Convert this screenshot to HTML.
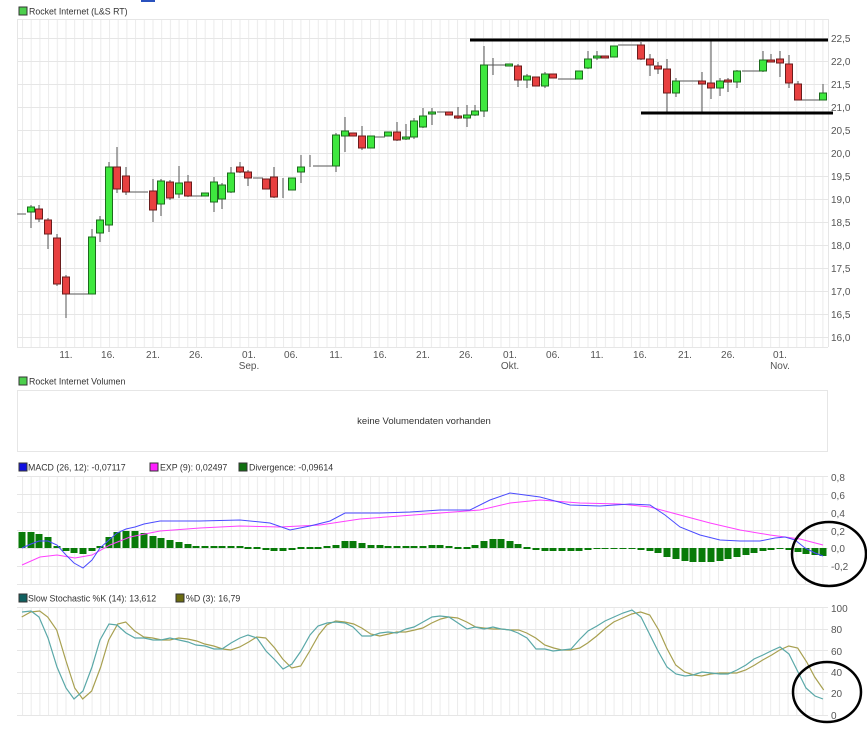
<!DOCTYPE html>
<html><head><meta charset="utf-8"><style>
body{margin:0;background:#fff;width:867px;height:734px;overflow:hidden}
svg{display:block;font-family:"Liberation Sans",sans-serif}
.l{font-size:8.8px;fill:#333}
.a{font-size:10px;fill:#555}
.g rect{stroke-width:1}
.gr{fill:#3ee83e;stroke:#1d6b1d}
.rd{fill:#e84040;stroke:#6b1d1d}
.w{stroke:#555;stroke-width:1}
</style></head><body>
<svg width="867" height="734" viewBox="0 0 867 734">
<defs>
<pattern id="vg" patternUnits="userSpaceOnUse" x="22" y="0" width="8.7" height="734"><line x1="0.5" y1="0" x2="0.5" y2="734" stroke="#ebebeb" stroke-width="1"/></pattern>
</defs>
<rect x="141" y="0" width="14" height="2" fill="#2a52be"/>
<!-- price panel -->
<rect x="19" y="7" width="8" height="8" fill="#4ccf4c" stroke="#333" stroke-width="1"/>
<text class="l" x="29" y="14.5">Rocket Internet (L&amp;S RT)</text>
<rect x="17" y="19" width="811" height="328" fill="url(#vg)"/>
<g stroke="#e6e6e6" stroke-width="1">
<line x1="17" y1="19.5" x2="828" y2="19.5"/>
<line x1="17" y1="38.5" x2="828" y2="38.5"/><line x1="17" y1="61.5" x2="828" y2="61.5"/><line x1="17" y1="84.5" x2="828" y2="84.5"/><line x1="17" y1="107.5" x2="828" y2="107.5"/><line x1="17" y1="130.5" x2="828" y2="130.5"/><line x1="17" y1="153.5" x2="828" y2="153.5"/><line x1="17" y1="176.5" x2="828" y2="176.5"/><line x1="17" y1="199.5" x2="828" y2="199.5"/><line x1="17" y1="222.5" x2="828" y2="222.5"/><line x1="17" y1="245.5" x2="828" y2="245.5"/><line x1="17" y1="268.5" x2="828" y2="268.5"/><line x1="17" y1="291.5" x2="828" y2="291.5"/><line x1="17" y1="314.5" x2="828" y2="314.5"/><line x1="17" y1="337.5" x2="828" y2="337.5"/><line x1="17" y1="347.5" x2="828" y2="347.5"/>
<line x1="828.5" y1="19" x2="828.5" y2="347"/><line x1="17.5" y1="19" x2="17.5" y2="347"/>
</g>
<g class="a">
<text x="831" y="42">22,5</text><text x="831" y="65">22,0</text><text x="831" y="88">21,5</text><text x="831" y="111">21,0</text><text x="831" y="134">20,5</text><text x="831" y="157">20,0</text><text x="831" y="180">19,5</text><text x="831" y="203">19,0</text><text x="831" y="226">18,5</text><text x="831" y="249">18,0</text><text x="831" y="272">17,5</text><text x="831" y="295">17,0</text><text x="831" y="318">16,5</text><text x="831" y="341">16,0</text>
</g>
<g class="a" text-anchor="middle">
<text x="66" y="358">11.</text><text x="108" y="358">16.</text><text x="153" y="358">21.</text><text x="196" y="358">26.</text><text x="249" y="358">01.</text><text x="249" y="369">Sep.</text><text x="291" y="358">06.</text><text x="336" y="358">11.</text><text x="380" y="358">16.</text><text x="423" y="358">21.</text><text x="466" y="358">26.</text><text x="510" y="358">01.</text><text x="510" y="369">Okt.</text><text x="553" y="358">06.</text><text x="597" y="358">11.</text><text x="640" y="358">16.</text><text x="685" y="358">21.</text><text x="728" y="358">26.</text><text x="780" y="358">01.</text><text x="780" y="369">Nov.</text>
</g>
<g stroke="#777" stroke-width="1.2">
<line x1="17" y1="214" x2="26" y2="214"/><line x1="70" y1="294" x2="88" y2="294"/><line x1="130" y1="192" x2="148" y2="192"/><line x1="192" y1="196" x2="202" y2="196"/><line x1="253" y1="178" x2="263" y2="178"/><line x1="313" y1="166" x2="332" y2="166"/><line x1="375" y1="137" x2="385" y2="137"/><line x1="437" y1="112" x2="445" y2="112"/><line x1="488" y1="65" x2="505" y2="65"/><line x1="558" y1="79" x2="576" y2="79"/><line x1="618" y1="45" x2="638" y2="45"/><line x1="680" y1="81" x2="700" y2="81"/><line x1="742" y1="71" x2="760" y2="71"/><line x1="802" y1="100" x2="820" y2="100"/>
</g>
<g class="w">
<line x1="31" y1="205" x2="31" y2="228"/><line x1="39" y1="205" x2="39" y2="222"/><line x1="48" y1="218" x2="48" y2="249"/><line x1="57" y1="234" x2="57" y2="286"/><line x1="66" y1="275" x2="66" y2="318"/><line x1="92" y1="229" x2="92" y2="294"/><line x1="100" y1="216" x2="100" y2="242"/><line x1="109" y1="162" x2="109" y2="232"/><line x1="117" y1="147" x2="117" y2="193"/><line x1="126" y1="167" x2="126" y2="195"/><line x1="153" y1="179" x2="153" y2="222"/><line x1="161" y1="179" x2="161" y2="216"/><line x1="170" y1="180" x2="170" y2="200"/><line x1="179" y1="166" x2="179" y2="198"/><line x1="188" y1="175" x2="188" y2="197"/><line x1="214" y1="177" x2="214" y2="212"/><line x1="222" y1="183" x2="222" y2="209"/><line x1="231" y1="167" x2="231" y2="193"/><line x1="240" y1="162" x2="240" y2="173"/><line x1="248" y1="170" x2="248" y2="186"/><line x1="274" y1="167" x2="274" y2="198"/><line x1="283" y1="178" x2="283" y2="198"/><line x1="301" y1="155" x2="301" y2="183"/><line x1="310" y1="155" x2="310" y2="167"/><line x1="336" y1="133" x2="336" y2="172"/><line x1="345" y1="117" x2="345" y2="152"/><line x1="362" y1="126" x2="362" y2="150"/><line x1="397" y1="122" x2="397" y2="141"/><line x1="406" y1="124" x2="406" y2="140"/><line x1="414" y1="118" x2="414" y2="139"/><line x1="423" y1="108" x2="423" y2="128"/><line x1="432" y1="108" x2="432" y2="125"/><line x1="458" y1="107" x2="458" y2="119"/><line x1="467" y1="105" x2="467" y2="127"/><line x1="475" y1="105" x2="475" y2="116"/><line x1="484" y1="46" x2="484" y2="117"/><line x1="493" y1="58" x2="493" y2="75"/><line x1="518" y1="64" x2="518" y2="87"/><line x1="527" y1="74" x2="527" y2="88"/><line x1="545" y1="72" x2="545" y2="88"/><line x1="588" y1="51" x2="588" y2="69"/><line x1="597" y1="51" x2="597" y2="60"/><line x1="641" y1="42" x2="641" y2="60"/><line x1="650" y1="54" x2="650" y2="76"/><line x1="658" y1="62" x2="658" y2="74"/><line x1="667" y1="59" x2="667" y2="112"/><line x1="676" y1="78" x2="676" y2="97"/><line x1="702" y1="72" x2="702" y2="112"/><line x1="711" y1="41" x2="711" y2="99"/><line x1="720" y1="78" x2="720" y2="96"/><line x1="728" y1="78" x2="728" y2="92"/><line x1="737" y1="70" x2="737" y2="88"/><line x1="763" y1="51" x2="763" y2="72"/><line x1="771" y1="54" x2="771" y2="62"/><line x1="780" y1="51" x2="780" y2="77"/><line x1="789" y1="55" x2="789" y2="88"/><line x1="798" y1="81" x2="798" y2="100"/><line x1="823" y1="84" x2="823" y2="100"/>
</g>
<g class="g">
<rect class="gr" x="27.5" y="207" width="7" height="5"/>
<rect class="rd" x="35.5" y="209" width="7" height="10"/>
<rect class="rd" x="44.5" y="220" width="7" height="14"/>
<rect class="rd" x="53.5" y="238" width="7" height="46"/>
<rect class="rd" x="62.5" y="277" width="7" height="17"/>
<rect class="gr" x="88.5" y="237" width="7" height="57"/>
<rect class="gr" x="96.5" y="220" width="7" height="13"/>
<rect class="gr" x="105.5" y="167" width="7" height="58"/>
<rect class="rd" x="113.5" y="167" width="7" height="22"/>
<rect class="rd" x="122.5" y="176" width="7" height="16"/>
<rect class="rd" x="149.5" y="191" width="7" height="19"/>
<rect class="gr" x="157.5" y="181" width="7" height="23"/>
<rect class="rd" x="166.5" y="182" width="7" height="16"/>
<rect class="gr" x="175.5" y="183" width="7" height="11"/>
<rect class="rd" x="184.5" y="182" width="7" height="14"/>
<rect class="gr" x="201.5" y="193" width="7" height="3"/>
<rect class="gr" x="210.5" y="182" width="7" height="20"/>
<rect class="gr" x="218.5" y="185" width="7" height="14"/>
<rect class="gr" x="227.5" y="173" width="7" height="19"/>
<rect class="rd" x="236.5" y="167" width="7" height="5"/>
<rect class="rd" x="244.5" y="172" width="7" height="6"/>
<rect class="rd" x="262.5" y="179" width="7" height="10"/>
<rect class="rd" x="270.5" y="177" width="7" height="20"/>
<rect class="gr" x="288.5" y="178" width="7" height="12"/>
<rect class="gr" x="297.5" y="167" width="7" height="5"/>
<rect class="gr" x="332.5" y="135" width="7" height="31"/>
<rect class="gr" x="341.5" y="131" width="7" height="5"/>
<rect class="rd" x="349.5" y="133" width="7" height="3"/>
<rect class="rd" x="358.5" y="136" width="7" height="12"/>
<rect class="gr" x="367.5" y="136" width="7" height="12"/>
<rect class="gr" x="384.5" y="132" width="7" height="4"/>
<rect class="rd" x="393.5" y="132" width="7" height="8"/>
<rect class="gr" x="402.5" y="137" width="7" height="2"/>
<rect class="gr" x="410.5" y="121" width="7" height="16"/>
<rect class="gr" x="419.5" y="116" width="7" height="11"/>
<rect class="gr" x="428.5" y="112" width="7" height="2"/>
<rect class="rd" x="445.5" y="112" width="7" height="3"/>
<rect class="rd" x="454.5" y="116" width="7" height="2"/>
<rect class="gr" x="463.5" y="115" width="7" height="3"/>
<rect class="gr" x="471.5" y="111" width="7" height="4"/>
<rect class="gr" x="480.5" y="65" width="7" height="46"/>
<rect class="gr" x="505.5" y="64" width="7" height="2"/>
<rect class="rd" x="514.5" y="66" width="7" height="14"/>
<rect class="gr" x="523.5" y="76" width="7" height="4"/>
<rect class="rd" x="532.5" y="77" width="7" height="9"/>
<rect class="gr" x="541.5" y="74" width="7" height="12"/>
<rect class="rd" x="549.5" y="74" width="7" height="4"/>
<rect class="gr" x="575.5" y="71" width="7" height="8"/>
<rect class="gr" x="584.5" y="59" width="7" height="9"/>
<rect class="gr" x="593.5" y="56" width="7" height="2"/>
<rect class="rd" x="601.5" y="56" width="7" height="2"/>
<rect class="gr" x="610.5" y="46" width="7" height="11"/>
<rect class="rd" x="637.5" y="45" width="7" height="14"/>
<rect class="rd" x="646.5" y="59" width="7" height="6"/>
<rect class="rd" x="654.5" y="66" width="7" height="3"/>
<rect class="rd" x="663.5" y="69" width="7" height="24"/>
<rect class="gr" x="672.5" y="81" width="7" height="12"/>
<rect class="rd" x="698.5" y="81" width="7" height="3"/>
<rect class="rd" x="707.5" y="83" width="7" height="5"/>
<rect class="gr" x="716.5" y="81" width="7" height="7"/>
<rect class="rd" x="724.5" y="80" width="7" height="2"/>
<rect class="gr" x="733.5" y="71" width="7" height="11"/>
<rect class="gr" x="759.5" y="60" width="7" height="11"/>
<rect class="rd" x="767.5" y="60" width="7" height="2"/>
<rect class="rd" x="776.5" y="59" width="7" height="4"/>
<rect class="rd" x="785.5" y="64" width="7" height="19"/>
<rect class="rd" x="794.5" y="84" width="7" height="16"/>
<rect class="gr" x="819.5" y="93" width="7" height="7"/>
</g>
<rect x="470" y="38.5" width="358" height="3" fill="#000"/>
<rect x="641" y="111.5" width="192" height="3" fill="#000"/>

<!-- volume -->
<rect x="19" y="377" width="8" height="8" fill="#4ccf4c" stroke="#333" stroke-width="1"/>
<text class="l" x="29" y="384.5">Rocket Internet Volumen</text>
<rect x="17.5" y="390.5" width="810" height="61" fill="#fff" stroke="#e6e6e6"/>
<text class="l" x="424" y="424" text-anchor="middle" style="font-size:9.5px">keine Volumendaten vorhanden</text>

<!-- MACD -->
<rect x="19" y="463" width="8" height="8" fill="#1010e0" stroke="#333"/>
<text class="l" x="28" y="470.5">MACD (26, 12): -0,07117</text>
<rect x="150" y="463" width="8" height="8" fill="#ff20ff" stroke="#333"/>
<text class="l" x="160" y="470.5">EXP (9): 0,02497</text>
<rect x="239" y="463" width="8" height="8" fill="#107010" stroke="#333"/>
<text class="l" x="249" y="470.5">Divergence: -0,09614</text>
<rect x="17" y="476" width="811" height="108" fill="url(#vg)"/>
<g stroke="#e6e6e6"><line x1="17" y1="476.5" x2="828" y2="476.5"/><line x1="17" y1="494.5" x2="828" y2="494.5"/><line x1="17" y1="512.5" x2="828" y2="512.5"/><line x1="17" y1="530.5" x2="828" y2="530.5"/><line x1="17" y1="548.5" x2="828" y2="548.5"/><line x1="17" y1="566.5" x2="828" y2="566.5"/><line x1="17" y1="584.5" x2="828" y2="584.5"/></g>
<g class="a"><text x="831" y="481">0,8</text><text x="831" y="499">0,6</text><text x="831" y="517">0,4</text><text x="831" y="535">0,2</text><text x="831" y="552">0,0</text><text x="831" y="570">-0,2</text></g>
<g fill="#087a08">
<rect x="18.5" y="532" width="7" height="16"/><rect x="27.5" y="532" width="7" height="16"/><rect x="35.5" y="534" width="7" height="14"/><rect x="44.5" y="537" width="7" height="11"/><rect x="53.5" y="546" width="7" height="2"/><rect x="62.5" y="548" width="7" height="3"/><rect x="70.5" y="548" width="7" height="5"/><rect x="79.5" y="548" width="7" height="6"/><rect x="88.5" y="548" width="7" height="3"/><rect x="96.5" y="546" width="7" height="2"/><rect x="105.5" y="537" width="7" height="11"/><rect x="113.5" y="532" width="7" height="16"/><rect x="122.5" y="531" width="7" height="17"/><rect x="131.5" y="531" width="7" height="17"/><rect x="140.5" y="533" width="7" height="15"/><rect x="149.5" y="536" width="7" height="12"/><rect x="157.5" y="538" width="7" height="10"/><rect x="166.5" y="540" width="7" height="8"/><rect x="175.5" y="542" width="7" height="6"/><rect x="184.5" y="544" width="7" height="4"/><rect x="192.5" y="546" width="7" height="2"/><rect x="201.5" y="546" width="7" height="2"/><rect x="210.5" y="546" width="7" height="2"/><rect x="218.5" y="546" width="7" height="2"/><rect x="227.5" y="546" width="7" height="2"/><rect x="236.5" y="546" width="7" height="2"/><rect x="244.5" y="547" width="7" height="2"/><rect x="253.5" y="547" width="7" height="2"/><rect x="262.5" y="548" width="7" height="2"/><rect x="270.5" y="548" width="7" height="3"/><rect x="279.5" y="548" width="7" height="3"/><rect x="288.5" y="548" width="7" height="2"/><rect x="297.5" y="547" width="7" height="2"/><rect x="306.5" y="547" width="7" height="2"/><rect x="314.5" y="547" width="7" height="2"/><rect x="323.5" y="546" width="7" height="2"/><rect x="332.5" y="545" width="7" height="3"/><rect x="341.5" y="541" width="7" height="7"/><rect x="349.5" y="541" width="7" height="7"/><rect x="358.5" y="543" width="7" height="5"/><rect x="367.5" y="545" width="7" height="3"/><rect x="376.5" y="545" width="7" height="3"/><rect x="384.5" y="546" width="7" height="2"/><rect x="393.5" y="546" width="7" height="2"/><rect x="402.5" y="546" width="7" height="2"/><rect x="410.5" y="546" width="7" height="2"/><rect x="419.5" y="546" width="7" height="2"/><rect x="428.5" y="545" width="7" height="3"/><rect x="436.5" y="545" width="7" height="3"/><rect x="445.5" y="546" width="7" height="2"/><rect x="454.5" y="547" width="7" height="2"/><rect x="463.5" y="547" width="7" height="2"/><rect x="471.5" y="545" width="7" height="3"/><rect x="480.5" y="541" width="7" height="7"/><rect x="489.5" y="539" width="7" height="9"/><rect x="497.5" y="539" width="7" height="9"/><rect x="506.5" y="541" width="7" height="7"/><rect x="514.5" y="544" width="7" height="4"/><rect x="523.5" y="547" width="7" height="2"/><rect x="532.5" y="548" width="7" height="2"/><rect x="541.5" y="548" width="7" height="3"/><rect x="549.5" y="548" width="7" height="3"/><rect x="558.5" y="548" width="7" height="3"/><rect x="567.5" y="548" width="7" height="3"/><rect x="575.5" y="548" width="7" height="3"/><rect x="584.5" y="548" width="7" height="2"/><rect x="593.5" y="548" width="7" height="1"/><rect x="601.5" y="548" width="7" height="1"/><rect x="610.5" y="548" width="7" height="1"/><rect x="619.5" y="548" width="7" height="1"/><rect x="628.5" y="548" width="7" height="1"/><rect x="637.5" y="548" width="7" height="2"/><rect x="646.5" y="548" width="7" height="3"/><rect x="654.5" y="548" width="7" height="5"/><rect x="663.5" y="548" width="7" height="9"/><rect x="672.5" y="548" width="7" height="11"/><rect x="681.5" y="548" width="7" height="13"/><rect x="689.5" y="548" width="7" height="14"/><rect x="698.5" y="548" width="7" height="14"/><rect x="707.5" y="548" width="7" height="14"/><rect x="716.5" y="548" width="7" height="13"/><rect x="724.5" y="548" width="7" height="11"/><rect x="733.5" y="548" width="7" height="9"/><rect x="742.5" y="548" width="7" height="7"/><rect x="750.5" y="548" width="7" height="5"/><rect x="759.5" y="548" width="7" height="3"/><rect x="767.5" y="548" width="7" height="2"/><rect x="776.5" y="548" width="7" height="1"/><rect x="785.5" y="548" width="7" height="2"/><rect x="794.5" y="548" width="7" height="4"/><rect x="802.5" y="548" width="7" height="6"/><rect x="811.5" y="548" width="7" height="7"/><rect x="819.5" y="548" width="7" height="8"/>
</g>
<polyline fill="none" stroke="#ff40ff" stroke-width="1" points="22,565 40,557 57,555 75,558 92,555 110,545 130,537 160,531 200,528 240,526 280,527 320,525 360,519 400,516 440,513 480,510 510,503 540,500 580,503 620,504 650,507 680,515 710,523 740,530 770,535 800,539 823,545"/>
<polyline fill="none" stroke="#4a4aff" stroke-width="1" points="22,548 31,544 39,541 48,541 57,545 66,555 74,563 83,568 92,560 100,548 109,540 117,533 126,529 135,527 144,524 160,521 200,521 240,520 270,523 290,530 310,526 330,521 345,513 380,513 410,512 440,510 470,510 490,500 510,493 540,497 570,505 600,506 630,504 650,505 665,515 680,527 700,535 720,540 740,541 760,541 775,538 785,537 795,540 805,548 815,553 823,556"/>
<ellipse cx="829" cy="554" rx="37" ry="32" fill="none" stroke="#000" stroke-width="2.5"/>

<!-- Stochastic -->
<rect x="19" y="594" width="8" height="8" fill="#106060" stroke="#333"/>
<text class="l" x="28" y="601.5">Slow Stochastic %K (14): 13,612</text>
<rect x="176" y="594" width="8" height="8" fill="#6b6b10" stroke="#333"/>
<text class="l" x="186" y="601.5">%D (3): 16,79</text>
<rect x="17" y="607" width="811" height="108" fill="url(#vg)"/>
<g stroke="#e6e6e6"><line x1="17" y1="607.5" x2="828" y2="607.5"/><line x1="17" y1="629.5" x2="828" y2="629.5"/><line x1="17" y1="650.5" x2="828" y2="650.5"/><line x1="17" y1="672.5" x2="828" y2="672.5"/><line x1="17" y1="693.5" x2="828" y2="693.5"/><line x1="17" y1="715.5" x2="828" y2="715.5"/></g>
<g class="a"><text x="831" y="612">100</text><text x="831" y="633">80</text><text x="831" y="655">60</text><text x="831" y="676">40</text><text x="831" y="697">20</text><text x="831" y="719">0</text></g>
<polyline fill="none" stroke="#a8a050" stroke-width="1.2" transform="translate(8.7,0)" points="13,617 22,612 31,611 39,617 48,630 57,660 66,688 74,699 83,691 92,667 100,640 109,624 117,622 126,631 135,637 144,638 153,640 161,640 170,638 179,639 188,641 196,644 205,646 214,649 222,650 231,647 240,642 248,637 257,638 266,648 274,659 283,668 292,666 301,651 310,635 318,625 327,621 336,622 345,624 353,628 362,634 371,636 380,634 388,632 397,632 406,630 414,628 423,623 432,619 440,617 449,618 458,622 467,627 475,628 484,629 493,629 501,630 510,630 518,633 527,638 536,645 545,648 553,650 562,650 571,648 579,643 588,636 597,628 605,622 614,618 623,614 632,612 641,615 650,630 658,648 667,665 676,672 685,675 693,676 702,674 711,673 720,673 728,673 737,670 746,665 754,660 763,655 771,650 780,646 789,648 798,662 806,677 815,690"/>
<polyline fill="none" stroke="#5aa8a8" stroke-width="1.2" points="22,612 31,611 39,617 48,638 57,667 66,688 74,699 83,691 92,667 100,640 109,624 117,625 126,633 135,638 144,638 153,640 161,640 170,638 179,640 188,642 196,645 205,646 214,649 222,649 231,643 240,638 248,635 257,638 266,651 274,659 283,669 292,664 301,651 310,635 318,626 327,623 336,622 345,623 353,627 362,636 371,636 380,633 388,632 397,633 406,629 414,627 423,622 432,617 440,616 449,617 458,623 467,629 475,627 484,629 493,627 501,629 510,630 518,633 527,638 536,649 545,649 553,651 562,650 571,649 579,640 588,631 597,626 605,621 614,617 623,613 632,610 641,617 650,635 658,651 667,667 676,674 685,676 693,675 702,672 711,673 720,674 728,674 737,670 746,665 754,659 763,655 771,651 780,647 789,654 798,672 806,688 815,696 823,699"/>
<ellipse cx="827" cy="692" rx="34" ry="30" fill="none" stroke="#000" stroke-width="2.5"/>
</svg>
</body></html>
